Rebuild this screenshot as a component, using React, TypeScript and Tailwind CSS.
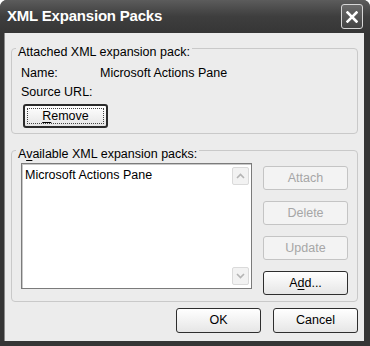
import React from 'react';

const font = { fontFamily: '"Liberation Sans", Arial, sans-serif' };

const Btn = ({
  children,
  disabled,
  isDefault,
  className = '',
}: {
  children: React.ReactNode;
  disabled?: boolean;
  isDefault?: boolean;
  className?: string;
}) => (
  <button
    type="button"
    className={
      'relative flex h-[24px] w-[85px] items-center justify-center rounded-[3px] text-[12.5px] leading-none ' +
      (disabled
        ? 'border border-[#c4c4c4] bg-[#f3f3f3] text-[#a6a6a6]'
        : isDefault
          ? 'border-2 border-[#2b2b2b] bg-gradient-to-b from-white to-[#e6e6e6] text-black'
          : 'border border-[#2e2e2e] bg-gradient-to-b from-white to-[#e6e6e6] text-black') +
      ' ' +
      className
    }
  >
    {isDefault && (
      <span className="pointer-events-none absolute inset-[2px] border border-dotted border-[#444]" />
    )}
    <span className="relative">{children}</span>
  </button>
);

const GroupBox = ({
  label,
  className = '',
  children,
}: {
  label: React.ReactNode;
  className?: string;
  children: React.ReactNode;
}) => (
  <div className={'relative rounded-[4px] border border-[#c9c9c9] ' + className}>
    <span className="absolute -top-[3px] left-[4px] bg-[#ececec] px-[2px] text-[12.5px] leading-none text-black">
      {label}
    </span>
    {children}
  </div>
);

const Chevron = ({ up }: { up?: boolean }) => (
  <svg width="9" height="6" viewBox="0 0 9 6">
    <path
      d={up ? 'M1 5 L4.5 1.5 L8 5' : 'M1 1 L4.5 4.5 L8 1'}
      fill="none"
      stroke="#b4b4b4"
      strokeWidth="1.6"
    />
  </svg>
);

export default function App() {
  return (
    <div className="h-[346px] w-[370px] bg-white" style={font}>
      <div className="flex h-[346px] w-[370px] flex-col rounded-t-[7px] bg-[#353535]">
        {/* title bar */}
        <div className="flex h-[33px] shrink-0 items-center justify-between rounded-t-[7px] bg-gradient-to-b from-[#5c5c5c] via-[#3e3e3e] to-[#363636] pl-[7px] pr-[7px]">
          <span className="text-[15px] font-bold tracking-[-0.2px] text-white">XML Expansion Packs</span>
          <button
            type="button"
            className="flex h-[25px] w-[22px] items-center justify-center rounded-[3px] border border-[#d6d6d6] bg-gradient-to-b from-[#6a6a6a] to-[#444]"
          >
            <svg width="12" height="12" viewBox="0 0 12 12">
              <path d="M1.5 1.5 L10.5 10.5 M10.5 1.5 L1.5 10.5" stroke="white" strokeWidth="2.6" strokeLinecap="square" />
            </svg>
          </button>
        </div>

        {/* client area */}
        <div className="mb-[5px] ml-[4px] mr-[6px] flex flex-1 flex-col border-l border-[#8a8a8a] bg-[#ececec] pb-[8px] pl-[6px] pr-[6px] pt-[15px]">
          <GroupBox label="Attached XML expansion pack:" className="h-[86px]">
            <div className="flex flex-col pl-[9px] pt-[15px] text-[12.5px] text-black">
              <div className="flex h-[19px] items-center">
                <span className="w-[79px]">Name:</span>
                <span>Microsoft Actions Pane</span>
              </div>
              <div className="flex h-[19px] items-center">
                <span>Source URL:</span>
              </div>
              <Btn isDefault className="ml-[2px] mt-[2px] w-[84px]">
                <span className="underline underline-offset-2">R</span>emove
              </Btn>
            </div>
          </GroupBox>

          <GroupBox
            label={
              <>
                A<span className="underline underline-offset-2">v</span>ailable XML expansion packs:
              </>
            }
            className="mt-[16px] h-[152px]"
          >
            <div className="flex gap-[11px] pl-[9px] pt-[12px]">
              <div className="flex h-[126px] w-[231px] border border-[#7b7b7b] bg-white shadow-[inset_1px_1px_0_#c8c8c8]">
                <div className="flex-1 pl-[3px] pt-[4px] text-[12.5px] leading-[14px] text-black">
                  Microsoft Actions Pane
                </div>
                <div className="my-[3px] mr-[2px] flex w-[17px] flex-col justify-between">
                  <div className="flex h-[18px] items-center justify-center rounded-[2px] border border-[#dadada] bg-[#f2f2f2]">
                    <Chevron up />
                  </div>
                  <div className="flex h-[18px] items-center justify-center rounded-[2px] border border-[#dadada] bg-[#f2f2f2]">
                    <Chevron />
                  </div>
                </div>
              </div>
              <div className="flex flex-col gap-[11px] pt-[3px]">
                <Btn disabled>Attach</Btn>
                <Btn disabled>Delete</Btn>
                <Btn disabled>Update</Btn>
                <Btn>
                  A<span className="underline underline-offset-2">d</span>d...
                </Btn>
              </div>
            </div>
          </GroupBox>

          <div className="mt-[6px] flex justify-end gap-[12px]">
            <Btn className="h-[25px]">OK</Btn>
            <Btn className="h-[25px]">Cancel</Btn>
          </div>
        </div>
      </div>
    </div>
  );
}
